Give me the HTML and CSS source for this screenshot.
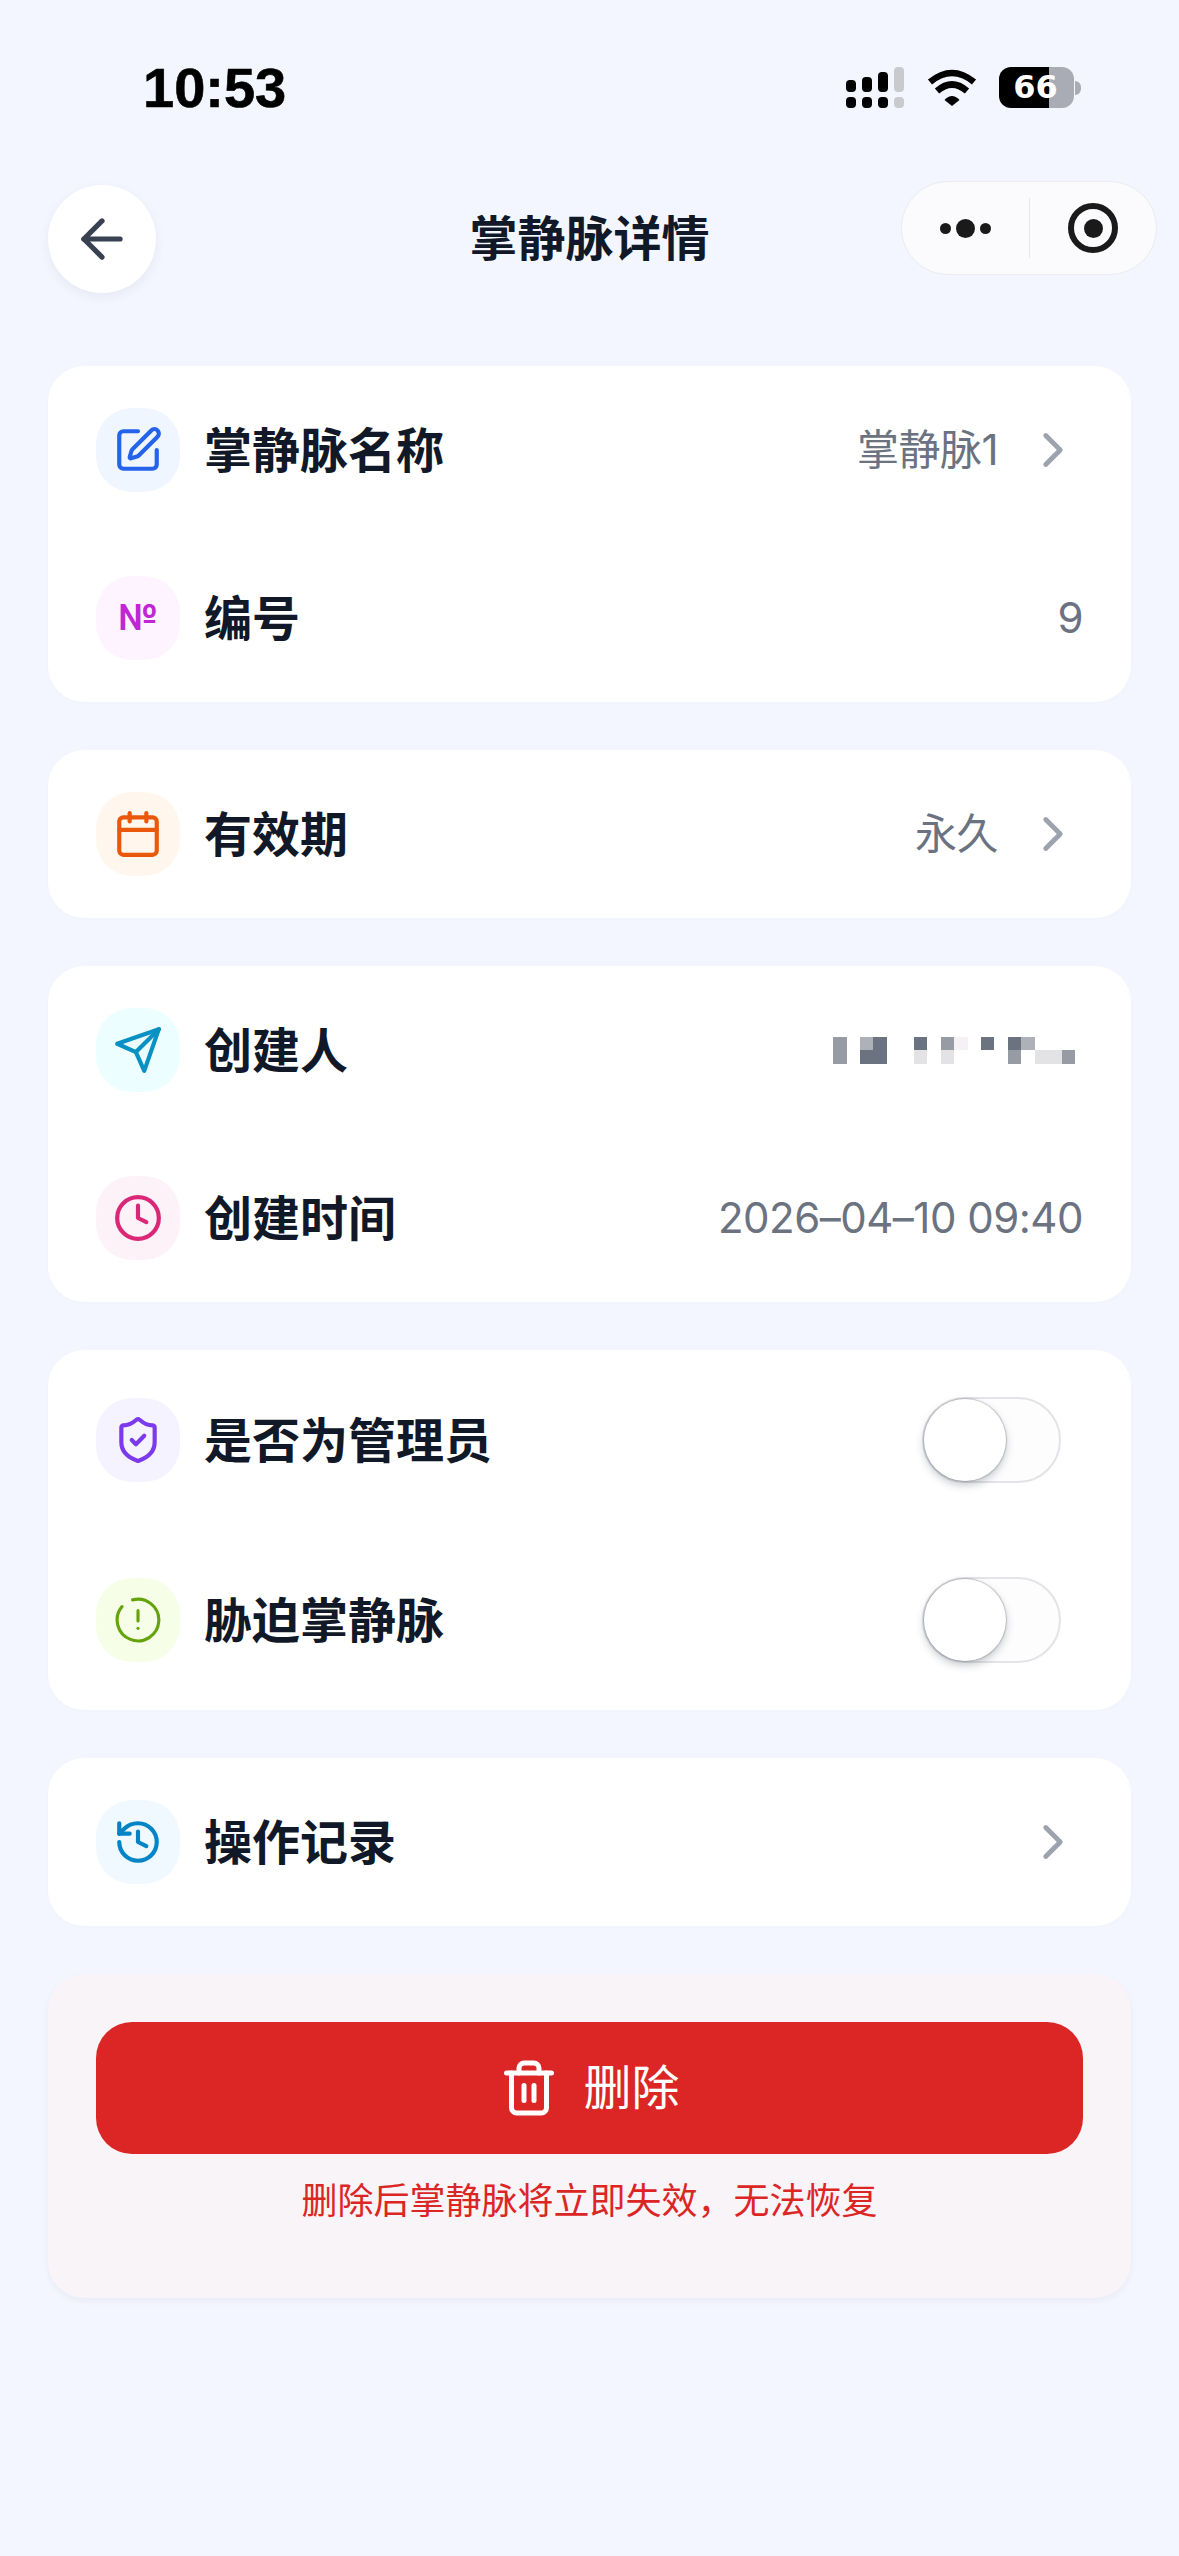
FILE: index.html
```html
<!DOCTYPE html>
<html lang="zh-CN">
<head>
	<meta charset="UTF-8">
	<title>掌静脉详情</title>
	<link rel="stylesheet" href="styles.css">
</head>
<body>

<!-- status bar -->
<div class="statusbar">
	<span class="time">10:53</span>
	<div class="status-icons">
		<svg class="signal" width="58" height="41" viewBox="0 0 58 41">
			<rect x="0" y="13" width="10" height="12" rx="4"/>
			<rect x="16" y="10" width="10" height="15" rx="4"/>
			<rect x="32" y="5" width="10" height="20" rx="4"/>
			<rect class="off" x="48" y="0" width="10" height="25" rx="4"/>
			<rect x="0" y="30" width="10" height="11" rx="4"/>
			<rect x="16" y="30" width="10" height="11" rx="4"/>
			<rect x="32" y="30" width="10" height="11" rx="4"/>
			<rect class="off" x="48" y="30" width="10" height="11" rx="4"/>
		</svg>
		<svg class="wifi" width="50" height="37" viewBox="0 0 50 37">
			<path d="M3 13Q25 -5 47 13" fill="none" stroke="#000" stroke-width="6.5"/>
			<path d="M10 22Q25 9 40 22" fill="none" stroke="#000" stroke-width="6.5"/>
			<path d="M17.5 31Q25 23 32.5 31L25 37Z"/>
		</svg>
		<div class="battery">
			<div class="battery-body"><span class="battery-num">66</span></div>
			<div class="battery-tip"></div>
		</div>
	</div>
</div>

<!-- nav bar -->
<div class="navbar">
	<div class="back">
		<svg class="line" width="62" height="62" viewBox="0 0 24 24"><path d="M19 12H5"/><path d="M12 19l-7-7 7-7"/></svg>
	</div>
	<div class="nav-title">掌静脉详情</div>
	<div class="capsule">
		<div class="capsule-dots"><i></i><i class="big"></i><i></i></div>
		<div class="capsule-line"></div>
		<div class="capsule-target"><i></i></div>
	</div>
</div>

<div class="content">

	<div class="card">
		<div class="row">
			<div class="tile blue">
				<svg class="line" width="50" height="50" viewBox="0 0 24 24"><path d="M12 3H5a2 2 0 0 0-2 2v14a2 2 0 0 0 2 2h14a2 2 0 0 0 2-2v-7"/><path d="M18.375 2.625a1 1 0 0 1 3 3l-9.013 9.014a2 2 0 0 1-.853.505l-2.873.84a.5.5 0 0 1-.62-.62l.84-2.873a2 2 0 0 1 .506-.852z"/></svg>
			</div>
			<span class="label">掌静脉名称</span>
			<span class="value">掌静脉1</span>
			<svg class="line chevron" width="58" height="58" viewBox="0 0 24 24"><path d="m9 18 6-6-6-6"/></svg>
		</div>
		<div class="row">
			<div class="tile fuchsia"><span class="numero">№</span></div>
			<span class="label">编号</span>
			<span class="value">9</span>
		</div>
	</div>

	<div class="card">
		<div class="row">
			<div class="tile orange">
				<svg class="line" width="50" height="50" viewBox="0 0 24 24"><path d="M8 2v4"/><path d="M16 2v4"/><rect x="3" y="4" width="18" height="18" rx="2"/><path d="M3 10h18"/></svg>
			</div>
			<span class="label">有效期</span>
			<span class="value">永久</span>
			<svg class="line chevron" width="58" height="58" viewBox="0 0 24 24"><path d="m9 18 6-6-6-6"/></svg>
		</div>
	</div>

	<div class="card">
		<div class="row">
			<div class="tile cyan">
				<svg class="line" width="50" height="50" viewBox="0 0 24 24"><path d="M22 2 11 13"/><path d="M22 2l-7 20-4-9-9-4 20-7z"/></svg>
			</div>
			<span class="label">创建人</span>
			<div class="mosaic">
				<i class="m2"></i><i></i><i class="m3"></i><i class="m1"></i><i></i><i></i><i class="m1"></i><i></i><i class="m2"></i><i class="m5"></i><i></i><i class="m1"></i><i></i><i class="m1"></i><i class="m3"></i><i></i><i></i><i></i>
				<i class="m2"></i><i></i><i class="m1"></i><i class="m1"></i><i></i><i></i><i class="m4"></i><i></i><i class="m4"></i><i></i><i></i><i></i><i></i><i class="m2"></i><i></i><i class="m4"></i><i class="m4"></i><i class="m2"></i>
			</div>
		</div>
		<div class="row">
			<div class="tile pink">
				<svg class="line" width="50" height="50" viewBox="0 0 24 24"><circle cx="12" cy="12" r="10"/><path d="M12 6v6l4 2"/></svg>
			</div>
			<span class="label">创建时间</span>
			<span class="value">2026–04–10 09:40</span>
		</div>
	</div>

	<div class="card">
		<div class="row tall">
			<div class="tile violet">
				<svg class="line" width="50" height="50" viewBox="0 0 24 24"><path d="M20 13c0 5-3.5 7.5-7.66 8.95a1 1 0 0 1-.67-.01C7.5 20.5 4 18 4 13V6a1 1 0 0 1 1-1c2 0 4.5-1.2 6.24-2.72a1.17 1.17 0 0 1 1.52 0C14.51 3.81 17 5 19 5a1 1 0 0 1 1 1z"/><path d="m9 12 2 2 4-4"/></svg>
			</div>
			<span class="label">是否为管理员</span>
			<div class="switch"><div class="knob"></div></div>
		</div>
		<div class="row tall">
			<div class="tile lime">
				<svg class="line thin" width="50" height="50" viewBox="0 0 24 24"><path d="M9.41 2.34A10 10 0 1 1 4.34 5.57"/><path d="M12 7.5v5"/><path d="M12 16h.01"/></svg>
			</div>
			<span class="label">胁迫掌静脉</span>
			<div class="switch"><div class="knob"></div></div>
		</div>
	</div>

	<div class="card">
		<div class="row">
			<div class="tile sky">
				<svg class="line" width="50" height="50" viewBox="0 0 24 24"><path d="M3 12a9 9 0 1 0 9-9 9.75 9.75 0 0 0-6.74 2.74L3 8"/><path d="M3 3v5h5"/><path d="M12 7v5l4 2"/></svg>
			</div>
			<span class="label">操作记录</span>
			<svg class="line chevron auto" width="58" height="58" viewBox="0 0 24 24"><path d="m9 18 6-6-6-6"/></svg>
		</div>
	</div>

	<div class="card danger">
		<div class="delete-btn">
			<svg class="line" width="60" height="60" viewBox="0 0 24 24"><path d="M3 6h18"/><path d="M19 6v14c0 1-1 2-2 2H7c-1 0-2-1-2-2V6"/><path d="M8 6V4c0-1 1-2 2-2h4c1 0 2 1 2 2v2"/><path d="M10 11v6"/><path d="M14 11v6"/></svg>
			<span class="delete-text">删除</span>
		</div>
		<div class="delete-tip">删除后掌静脉将立即失效，无法恢复</div>
	</div>

</div>

</body>
</html>
```

FILE: styles.css
```css
html { background-color: #f3f6fe; }
body { margin: 0; height: 2556px; background-color: #f3f6fe; color: #111827; font-family: "Noto Sans CJK SC", "Inter", sans-serif; overflow: hidden; }

.line { fill: none; stroke: currentColor; stroke-width: 2; stroke-linecap: round; stroke-linejoin: round; flex: none; }
.line.thin { stroke-width: 1.5; }

/* status bar */
.statusbar { display: flex; justify-content: space-between; align-items: center; height: 41px; padding: 67px 98px 0 143px; }
.time { font-family: "Liberation Sans", sans-serif; font-weight: 700; font-size: 56px; line-height: 41px; color: #000; -webkit-text-stroke: 0.6px #000; }
.status-icons { display: flex; align-items: center; }
.signal rect { fill: #000; }
.signal rect.off { fill: #c9cacd; }
.wifi { margin-left: 23px; }
.battery { display: flex; align-items: center; margin-left: 22px; }
.battery-body { width: 75px; height: 41px; border-radius: 12px; display: flex; align-items: center; justify-content: center; background: linear-gradient(to right, #000 50px, #a9acb4 50px); }
.battery-num { font-family: "DejaVu Sans", sans-serif; font-weight: 700; font-size: 32px; line-height: 41px; color: #fff; margin-left: -2px; }
.battery-tip { width: 6px; height: 14px; margin-left: 1px; border-radius: 0 7px 7px 0; background: #a9acb4; }

/* nav bar */
.navbar { height: 114px; margin-top: 73px; padding: 0 22px; display: grid; grid-template-columns: 1fr auto 1fr; align-items: start; }
.back { width: 108px; height: 108px; margin: 4px 0 0 26px; border-radius: 50%; background: #fff; color: #374151; box-shadow: 0 4px 12px rgba(30, 40, 80, 0.06); display: flex; align-items: center; justify-content: center; }
.nav-title { font-size: 48px; font-weight: 700; line-height: 64px; margin-top: 22px; color: #111827; }
.capsule { justify-self: end; width: 256px; height: 94px; box-sizing: border-box; border: 1px solid #ebebf0; border-radius: 47px; background: #fbfbfe; display: flex; align-items: center; }
.capsule-dots { width: 127px; display: flex; align-items: center; justify-content: center; gap: 5px; }
.capsule-dots i { width: 11px; height: 11px; border-radius: 50%; background: #1a1a1a; }
.capsule-dots i.big { width: 19px; height: 19px; }
.capsule-line { width: 1px; height: 60px; background: #e6e6ea; }
.capsule-target { flex: 1; display: flex; align-items: center; justify-content: center; }
.capsule-target i { width: 50px; height: 50px; box-sizing: border-box; border: 6px solid #1a1a1a; border-radius: 50%; display: flex; align-items: center; justify-content: center; }
.capsule-target i::after { content: ""; width: 19px; height: 19px; border-radius: 50%; background: #1a1a1a; }

/* cards */
.content { display: flex; flex-direction: column; gap: 48px; padding: 0 48px; margin-top: 71px; }
.card { background: #fff; border-radius: 36px; box-shadow: 0 1px 4px rgba(30, 40, 80, 0.02); }
.row { display: flex; align-items: center; height: 168px; padding: 0 48px; }
.row.tall { height: 180px; }
.tile { width: 84px; height: 84px; border-radius: 36px; display: flex; align-items: center; justify-content: center; flex: none; }
.blue { background: #eff6ff; color: #2563eb; }
.fuchsia { background: #fdf4ff; color: #c026d3; }
.orange { background: #fff7ed; color: #ea580c; }
.cyan { background: #ecfeff; color: #0891c2; }
.pink { background: #fdf2f8; color: #db2777; }
.violet { background: #f5f3ff; color: #7c3aed; }
.lime { background: #f7fee7; color: #65a30d; }
.sky { background: #f0f9ff; color: #0284c7; }
.numero { font-family: "Inter", sans-serif; font-weight: 700; font-size: 36px; line-height: 1; margin-bottom: 3px; }

.label { margin-left: 24px; margin-bottom: 6px; font-size: 48px; font-weight: 700; line-height: 64px; color: #111827; }
.value { margin-left: auto; font-family: "Inter", "Noto Sans CJK SC", sans-serif; font-size: 42px; letter-spacing: -0.5px; line-height: 56px; color: #6b7280; }
.chevron { color: #9ca3af; margin: 0 1px 0 26px; }
.chevron.auto { margin-left: auto; }

.mosaic { margin-left: auto; margin-right: 8px; display: grid; grid-template-columns: repeat(18, 13.45px); grid-auto-rows: 13.5px; }
.m1 { background: #6b7280; }
.m2 { background: #979ba3; }
.m3 { background: #aeb1b7; }
.m4 { background: #e3e3e6; }
.m5 { background: #f5f1f5; }

.switch { margin-left: auto; margin-right: 22px; width: 139px; height: 86px; box-sizing: border-box; border: 2px solid #e4e4e8; border-radius: 43px; background: #fdfdfe; }
.knob { width: 82px; height: 82px; border-radius: 50%; background: #fff; box-shadow: 0 0 1px 1px rgba(120, 125, 135, 0.4), 0 4px 8px rgba(60, 65, 80, 0.3); }

/* delete area */
.danger { background: #f8f4f8; padding: 48px 48px 0; height: 324px; box-sizing: border-box; box-shadow: 0 3px 6px rgba(30, 40, 80, 0.05); }
.delete-btn { height: 132px; border-radius: 36px; background: #dc2626; color: #fff; display: flex; align-items: center; justify-content: center; gap: 24px; font-size: 48px; }
.delete-text { margin-bottom: 8px; }
.delete-tip { margin-top: 18px; text-align: center; font-size: 36px; line-height: 52px; color: #dc2626; }
```
